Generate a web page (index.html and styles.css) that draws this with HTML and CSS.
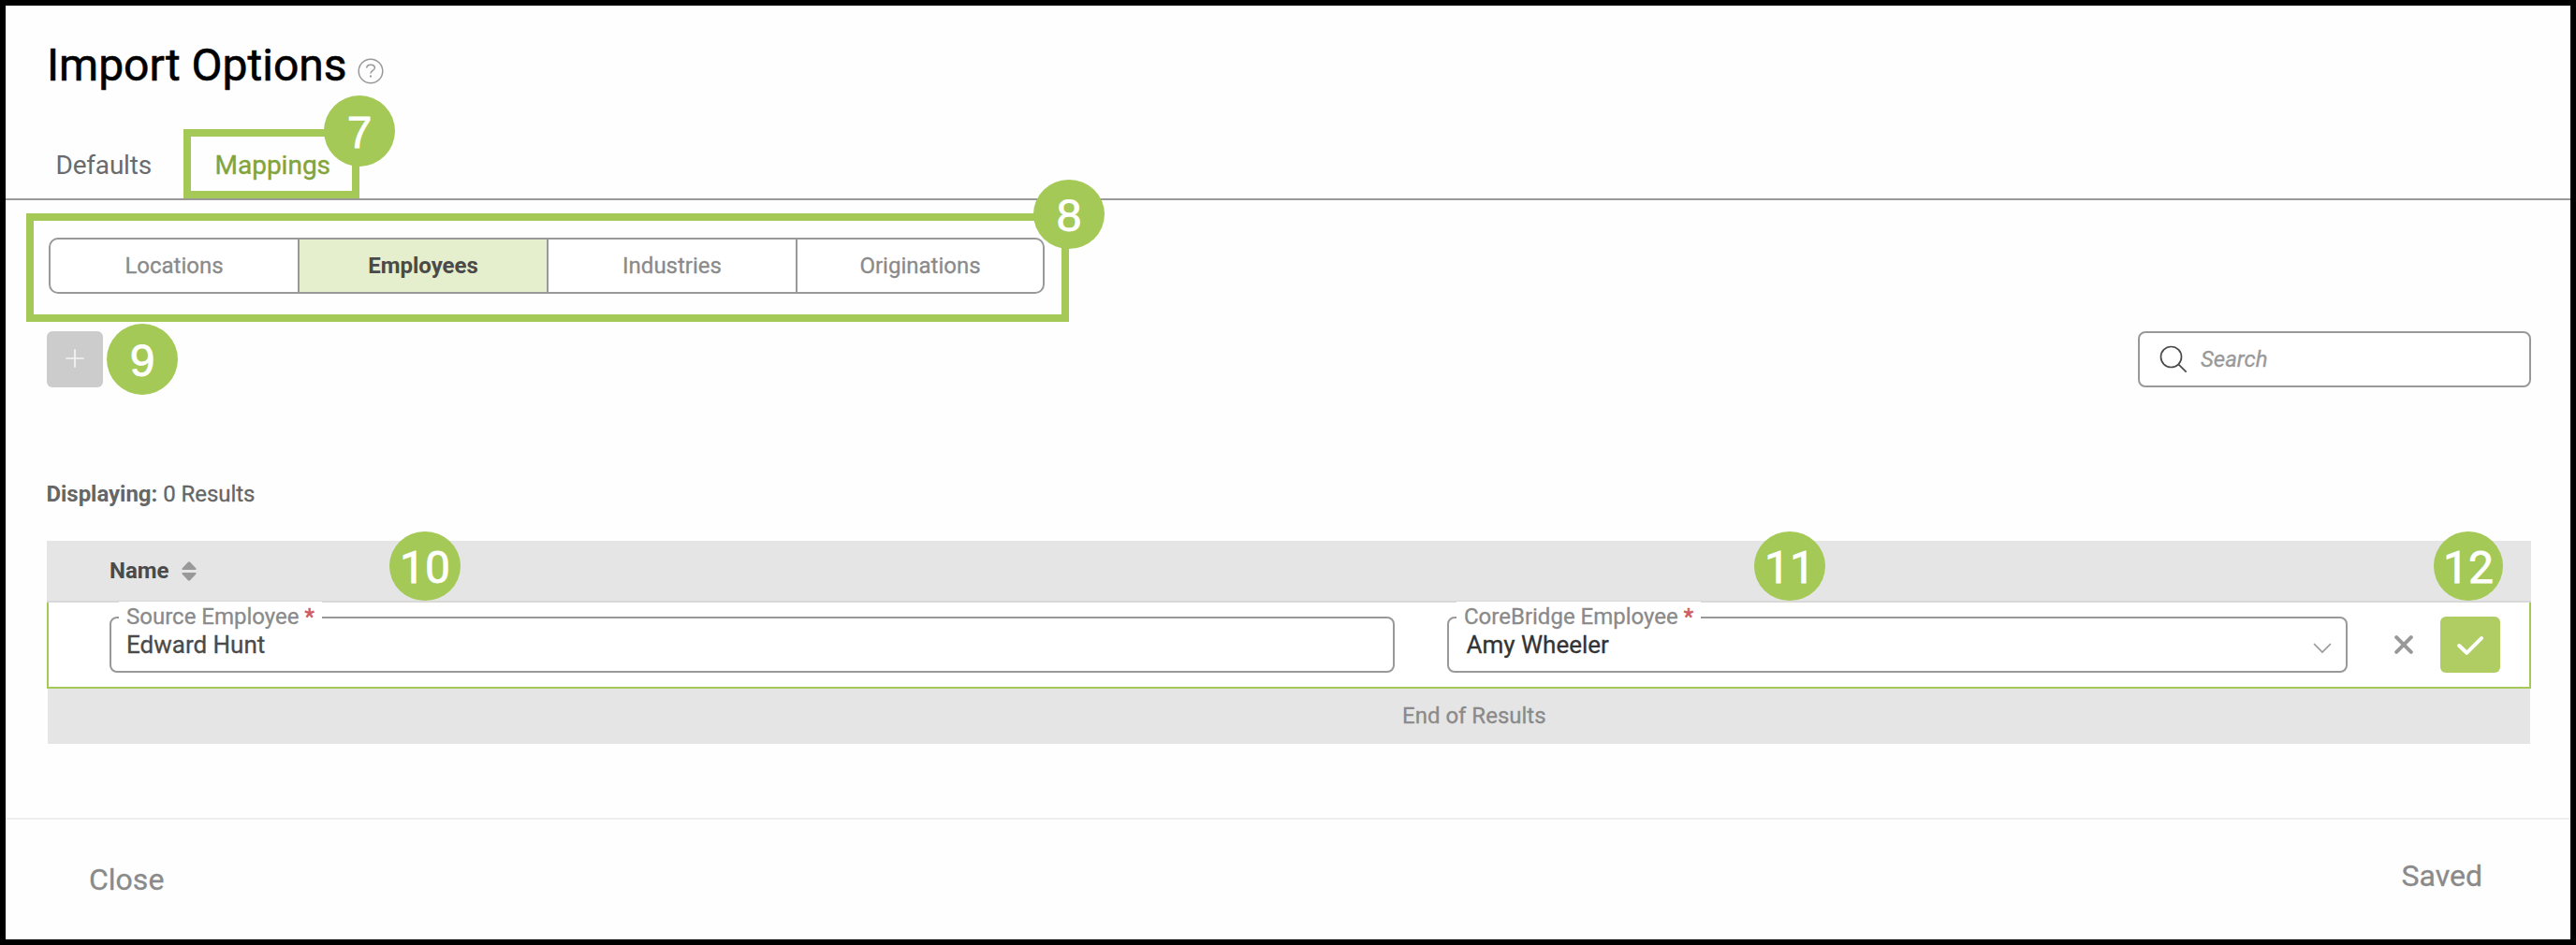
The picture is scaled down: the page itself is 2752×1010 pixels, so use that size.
FILE: index.html
```
<!DOCTYPE html>
<html lang="en">
<head>
<meta charset="utf-8">
<title>Import Options</title>
<link rel="stylesheet" href="styles.css">
</head>
<body>
<div class="dialog">
  <header class="header">
    <h1 class="title">Import Options</h1>
    <svg class="help" viewBox="0 0 28 28" fill="none" stroke="#999" stroke-width="1.5">
      <circle cx="14" cy="14" r="12.8"/>
      <path d="M9.6 10.600c.3-2.200 2.100-3.400 4.400-3.400 2.500 0 4.400 1.300 4.400 3.300 0 3.100-4.400 2.900-4.400 6.100"/>
      <path d="M14 18.400v2" stroke-width="2"/>
    </svg>
  </header>

  <nav class="tabs">
    <a class="tab">Defaults</a>
    <a class="tab tab-active">Mappings<span class="step step-7">7</span></a>
  </nav>

  <section class="switcher">
    <div class="segments">
      <button class="segment">Locations</button>
      <button class="segment segment-active">Employees</button>
      <button class="segment">Industries</button>
      <button class="segment">Originations</button>
    </div>
    <span class="step step-8">8</span>
  </section>

  <div class="toolbar">
    <button class="add" aria-label="Add">
      <svg class="add-icon" viewBox="0 0 20 20" fill="none" stroke="#f4f4f4" stroke-width="1.7"><path d="M10 .3v19.400M.3 10h19.400"/></svg>
      <span class="step step-9">9</span>
    </button>
    <label class="search">
      <svg class="search-icon" viewBox="0 0 30 30" fill="none" stroke="#4a4a4a" stroke-width="1.7"><circle cx="12.500" cy="12.500" r="11"/><path d="M20.300 20.300l8.400 8.400"/></svg>
      <span class="search-text">Search</span>
    </label>
  </div>

  <p class="count"><b>Displaying:</b> 0 Results</p>

  <section class="table">
    <div class="table-head">
      <span class="column">Name</span>
      <svg class="sort" viewBox="0 0 16 21" fill="#999"><path d="M1.300 9Q-.2 8.700.8 7.300L6.700.9Q8-.3 9.300.9l5.900 6.400Q16.200 8.700 14.700 9zM1.300 12Q-.2 12.300.8 13.700l5.900 6.400Q8 21.300 9.300 20.100l5.900-6.400Q16.200 12.300 14.700 12z"/></svg>
      <span class="step step-10">10</span>
      <span class="step step-11">11</span>
      <span class="step step-12">12</span>
    </div>
    <div class="table-row">
      <div class="field field-source">
        <span class="field-label">Source Employee <i class="required">*</i></span>
        <span class="field-value">Edward Hunt</span>
      </div>
      <div class="field field-target">
        <span class="field-label">CoreBridge Employee <i class="required">*</i></span>
        <span class="field-value field-value-dark">Amy Wheeler</span>
        <svg class="chevron" viewBox="0 0 20 12" fill="none" stroke="#999" stroke-width="1.700" stroke-linecap="round"><path d="M1.500 1.500L10 10l8.500-8.500"/></svg>
      </div>
      <svg class="cancel" viewBox="0 0 20 20" fill="none" stroke="#999" stroke-width="4" stroke-linecap="round"><path d="M2.200 2.200l15.600 15.600M17.800 2.200L2.200 17.800"/></svg>
      <button class="confirm" aria-label="Confirm">
        <svg class="check" viewBox="0 0 28 20" fill="none" stroke="#fff" stroke-width="4" stroke-linecap="round" stroke-linejoin="round"><path d="M2.200 10l8 7.800L26 2.200"/></svg>
      </button>
    </div>
    <div class="table-end">End of Results</div>
  </section>

  <footer class="footer">
    <span class="close">Close</span>
    <span class="saved">Saved</span>
  </footer>
</div>
</body>
</html>
```
FILE: styles.css
```
* { box-sizing: border-box; }

body {
  margin: 0;
  font-family: Roboto, "Liberation Sans", sans-serif;
  font-size: 24px;
  color: #666;
  -webkit-text-stroke: .3px currentColor;
}

button {
  margin: 0;
  padding: 0;
  border: 0;
  background: none;
  font: inherit;
  color: inherit;
}

b, .column, .segment-active { -webkit-text-stroke: 0; }

svg { display: block; flex: none; }

.dialog {
  display: flex;
  flex-direction: column;
  width: 2752px;
  height: 1010px;
  border: 6px solid #000;
  background: #fefefe;
}

.header {
  display: flex;
  gap: 11px;
  padding: 36px 0 0 44px;
}

.title {
  margin: 0;
  font-size: 48px;
  font-weight: 400;
  line-height: 56px;
  color: #000;
  -webkit-text-stroke-width: .6px;
}

.help { width: 28px; height: 28px; margin-top: 19.5px; }

.tabs {
  display: flex;
  align-items: flex-end;
  height: 116px;
  border-bottom: 2px solid #999;
}

.tab {
  position: relative;
  width: 190px;
  height: 74px;
  padding: 12px 0 0 53.5px;
  font-size: 28px;
  line-height: 53px;
  letter-spacing: -.2px;
  color: #6b6b6b;
  -webkit-text-stroke-width: 0;
}

.tab-active {
  width: 188px;
  padding: 4px 0 0 25.5px;
  border: 8px solid #a4c956;
  letter-spacing: 0;
  color: #82a43c;
  -webkit-text-stroke-width: .4px;
}

.switcher {
  position: relative;
  width: 1114px;
  height: 116px;
  margin: 14px 0 0 22px;
  padding: 18px 0 0 16px;
  border: 8px solid #a4c956;
}

.segments {
  display: flex;
  width: 1064px;
  height: 60px;
  border: 2px solid #999;
  border-radius: 10px;
  background: #fff;
}

.segment {
  width: 266px;
  padding-bottom: 1px;
  border-right: 2px solid #999;
  color: #8a8a8a;
}

.segment:last-child { flex: 1; border-right: 0; }

.segment-active { background: #e5eecd; font-weight: 700; color: #4a4a4a; }

.toolbar {
  display: flex;
  justify-content: space-between;
  padding: 10px 42px 0 44px;
}

.add {
  position: relative;
  display: flex;
  align-items: center;
  justify-content: center;
  width: 60px;
  height: 60px;
  border-radius: 6px;
  background: #ccc;
}

.add-icon { width: 20px; height: 20px; margin: 0 0 2px; }

.search {
  display: flex;
  align-items: center;
  width: 420px;
  height: 60px;
  padding-left: 21px;
  border: 2px solid #999;
  border-radius: 8px;
  background: #fff;
}

.search-icon { width: 30px; height: 30px; }

.search-text { margin: 0 0 1px 14px; font-style: italic; color: #999; }

.count { margin: 98px 0 0 43.5px; line-height: 32px; letter-spacing: -.04px; }

.table { width: 2654px; margin: 34px 0 0 44px; }

.table-head {
  position: relative;
  display: flex;
  align-items: center;
  height: 66px;
  padding-left: 67px;
  border-bottom: 2px solid #d8d8d8;
  background: #e5e5e5;
}

.column { font-weight: 700; color: #4a4a4a; }

.sort { width: 16px; height: 21px; margin: 1px 0 0 13px; }

.table-row {
  display: flex;
  align-items: flex-start;
  height: 92px;
  padding: 15px 31px 0 65px;
  border: solid #a4c956;
  border-width: 0 2px 2px;
  background: #fff;
}

.field {
  position: relative;
  height: 60px;
  padding-left: 16px;
  border: 2px solid #999;
  border-radius: 8px;
}

.field-source { width: 1373px; }

.field-target { width: 962px; margin-left: 56px; }

.field-target .field-value { padding-left: 2.5px; }

.field-label {
  position: absolute;
  top: -18px;
  left: 8px;
  padding: 0 8px;
  line-height: 32px;
  background: #fff;
  color: #8a8a8a;
}

.required { font-style: normal; color: #cd5c63; -webkit-text-stroke-width: .6px; }

.field-value { display: block; font-size: 26px; line-height: 56px; color: #4a4a4a; }

.field-value-dark { color: #333; }

.chevron { position: absolute; top: 26px; right: 15px; width: 20px; height: 12px; }

.cancel { width: 20px; height: 20px; margin: 20px 29px 0 50px; }

.confirm {
  display: flex;
  align-items: center;
  justify-content: center;
  width: 64px;
  height: 60px;
  border-radius: 6px;
  background: #b0cd63;
}

.check { width: 28px; height: 20px; margin-top: 2px; }

.table-end {
  height: 59px;
  margin: 0 1px;
  padding-left: 1447px;
  line-height: 59px;
  background: #e5e5e5;
  color: #8a8a8a;
}

.footer {
  display: flex;
  justify-content: space-between;
  flex: 1;
  margin-top: 79px;
  padding: 46px 94px 0 89px;
  border-top: 2px solid #eee;
  font-size: 32px;
  line-height: 36px;
  color: #8a8a8a;
}

.saved { margin-top: -4px; }

.step {
  position: absolute;
  width: 76px;
  height: 76px;
  border-radius: 50%;
  background: #a4c956;
  font: 48px/79px "Liberation Sans", sans-serif;
  letter-spacing: 0;
  text-align: center;
  color: #fff;
  -webkit-text-stroke: .8px #fff;
}

.step-7 { top: -44px; right: -46px; }
.step-8 { top: -44px; right: -46px; height: 74px; line-height: 77px; }
.step-9 { top: -8px; left: 64px; }

.step-10, .step-11, .step-12 {
  top: -10px;
  height: 74px;
  font-family: Roboto, sans-serif;
  line-height: 78px;
}

.step-10 { left: 366px; }
.step-11 { left: 1824px; }
.step-12 { left: 2550px; width: 74px; }
```
